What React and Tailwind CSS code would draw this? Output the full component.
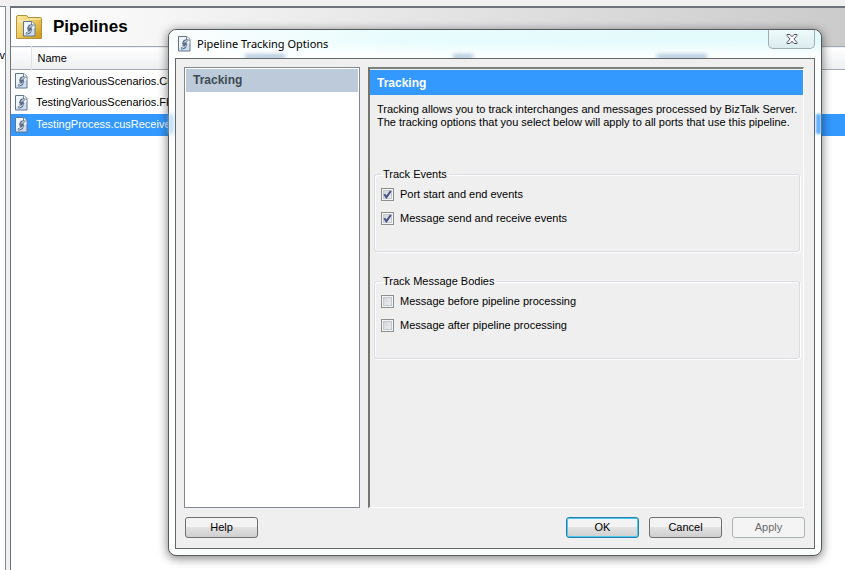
import React, { useState } from 'react';

const pipelines = [
  'TestingVariousScenarios.Cu',
  'TestingVariousScenarios.FF',
  'TestingProcess.cusReceive',
];

const groups = [
  {
    title: 'Track Events',
    gap: 'mb-[22px]',
    options: [
      { id: 'port', label: 'Port start and end events', checked: true },
      { id: 'message', label: 'Message send and receive events', checked: true },
    ],
  },
  {
    title: 'Track Message Bodies',
    gap: '',
    options: [
      { id: 'before', label: 'Message before pipeline processing', checked: false },
      { id: 'after', label: 'Message after pipeline processing', checked: false },
    ],
  },
];

function ScriptShape() {
  return (
    <g>
      <path d="M.5.5h8.5l3 3v11.500H.5z" fill="#cfdff1" stroke="#62758f" />
      <path d="M1 1h7.500v3.500H11.500V7L1 12.500z" fill="#edf5fd" />
      <path d="M8.500.5V4H12" fill="#fff" stroke="#7688a0" />
      {/* two slanted pipe links */}
      <path d="M9.500 4.300 6.500 5 5.300 7.600 8 8.400 6.800 11.300 3.300 12.700" fill="none" stroke="#5a6a84" strokeWidth="2.400" strokeLinejoin="round" />
      <path d="M9.300 4.600 7 5.300 6 7.200M8 8.800 6.700 11 3.800 12.300" fill="none" stroke="#e6eef8" strokeWidth="1" />
      <path d="M4.500 9.600h3M6.500 6.800h2.500" stroke="#3d4c66" strokeWidth=".8" />
    </g>
  );
}

function DocIcon() {
  return (
    <svg viewBox="0 0 13 16" className="h-4 w-[13px] shrink-0" aria-hidden="true">
      <ScriptShape />
    </svg>
  );
}

function FolderIcon() {
  return (
    <svg viewBox="0 0 26 25" className="h-[25px] w-[26px] shrink-0" aria-hidden="true">
      <defs>
        <linearGradient id="folder" x1="0" y1="0" x2="1" y2="1">
          <stop offset="0" stopColor="#fbe9a4" />
          <stop offset=".5" stopColor="#eecb5c" />
          <stop offset="1" stopColor="#c8940f" />
        </linearGradient>
      </defs>
      <path d="M.5 23.500V2Q.5.5 2 .5h8q1.500 0 2 2h12.500q1 0 1 1v20z" fill="url(#folder)" stroke="#b3913c" />
      <path d="M1.500 6h9l2-2h12" fill="none" stroke="#fdf2c4" />
      <g transform="translate(7 6)">
        <ScriptShape />
      </g>
    </svg>
  );
}

function CloseIcon() {
  return (
    <svg viewBox="0 0 12 10" className="h-[10px] w-3" aria-hidden="true">
      <path d="M1 .5h3l2 2.300L8 .5h3v1L8 5l3 3.500v1H8L6 7.200 4 9.500H1v-1L4 5 1 1.500z" fill="#fff" stroke="#4c5360" />
    </svg>
  );
}

function Option({ option }) {
  const [checked, setChecked] = useState(option.checked);
  return (
    <label className="flex h-6 items-center gap-[6px]">
      <span className="relative h-[13px] w-[13px]">
        <input
          type="checkbox"
          checked={checked}
          onChange={(e) => setChecked(e.target.checked)}
          className="block h-[13px] w-[13px] appearance-none border border-[#8e8f8f] bg-linear-to-br from-[#c9cdd2] to-[#f6f6f6] shadow-[inset_0_0_0_1px_#f4f4f4,inset_0_0_0_2px_#c3c8ce]"
        />
        {checked && (
          <svg viewBox="0 0 13 13" className="pointer-events-none absolute inset-0" aria-hidden="true">
            <path d="M3.300 6.200 5.400 9.300 9.800 3" fill="none" stroke="#414f87" strokeWidth="2" />
          </svg>
        )}
      </span>
      {option.label}
    </label>
  );
}

function OptionGroup({ group }) {
  return (
    <fieldset className={`h-[85px] rounded-[3px] border border-[#d9dde1] pl-[6px] shadow-[inset_1px_1px_0_#fff,1px_1px_0_#fff] ${group.gap}`}>
      <legend className="h-[14px] px-[2px] leading-[14px]">{group.title}</legend>
      <div className="pt-px">
        {group.options.map((o) => (
          <Option key={o.id} option={o} />
        ))}
      </div>
    </fieldset>
  );
}

const buttonBase = 'h-[21px] w-[73px] rounded-[3px] border text-center leading-[19px]';
const buttonFace = 'bg-linear-to-b from-[#f3f3f3] from-50% via-[#e2e2e2] via-50% to-[#cfcfcf]';

function TrackingDialog() {
  return (
    <div
      role="dialog"
      aria-labelledby="dialog-title"
      className="absolute top-[29px] right-[23px] bottom-[14px] left-[168px] flex flex-col rounded-lg border border-[#54595c] bg-[#fdffff] px-[6px] pb-[6px] shadow-[0_2px_10px_1px_rgba(0,0,0,0.45)]"
    >
      {/* glass tint of the title bar, with the column captions showing through */}
      <div className="absolute inset-x-0 top-0 h-7 overflow-hidden rounded-t-lg bg-linear-to-r from-[#fbfdfd] via-[#e6fcfd] via-40% to-[#e3fafb]">
        <div className="absolute inset-0 bg-linear-to-b from-transparent from-40% to-white" />
        <div className="absolute bottom-0 left-[76px] h-[3px] w-10 bg-[#86a9c9] blur-[2px]" />
        <div className="absolute bottom-0 left-[284px] h-[3px] w-5 bg-[#86a9c9] blur-[2px]" />
        <div className="absolute bottom-0 left-[488px] h-[3px] w-[50px] bg-[#86a9c9] blur-[2px]" />
      </div>
      <div className="absolute top-[84px] left-0 h-5 w-1 bg-[#a5d2fb] blur-[2px]" />
      <div className="absolute top-[84px] right-0 h-5 w-[5px] bg-[#5eaeff] blur-[1px]" />

      <div className="relative flex h-7 shrink-0 items-center gap-[6px] pl-[3px]">
        <DocIcon />
        <h2 id="dialog-title" className="font-['Noto_Sans',sans-serif] text-[11px]">Pipeline Tracking Options</h2>
        <button type="button" aria-label="Close" className="ml-auto flex h-[19px] w-[47px] items-center justify-center self-start rounded-b-[5px] border border-t-0 border-[#9fb0b5] bg-linear-to-b from-[#effbfb] to-[#dcecee]">
          <CloseIcon />
        </button>
      </div>

      <div className="relative flex min-h-0 flex-1 flex-col border border-[#63676a] bg-[#efefef] px-2 pt-2 pb-[10px]">
        <div className="flex min-h-0 flex-1 gap-2">
          <nav className="w-44 border border-[#828790] bg-white p-px">
            <button type="button" className="block h-[23px] w-full bg-[#bccad9] pl-[7px] text-left text-[12px] leading-[23px] font-bold text-[#3f4a54]">
              Tracking
            </button>
          </nav>
          <section className="mr-[2px] min-w-0 flex-1 border-t-2 border-r border-b border-l-2 border-t-[#7f827c] border-r-white border-b-white border-l-[#73746f]">
            <h3 className="mt-px h-[25px] bg-[#3399ff] pl-[7px] text-[12px] leading-[26px] font-bold text-white">Tracking</h3>
            <p className="mt-2 h-[64px] pl-[7px] leading-[13px] whitespace-nowrap">
              Tracking allows you to track interchanges and messages processed by BizTalk Server.
              <br />
              The tracking options that you select below will apply to all ports that use this pipeline.
            </p>
            <div className="pr-[3px] pl-1">
              {groups.map((g) => (
                <OptionGroup key={g.title} group={g} />
              ))}
            </div>
          </section>
        </div>
        <div className="mt-[9px] flex items-center gap-[10px] px-px">
          <button type="button" className={`${buttonBase} ${buttonFace} mr-auto border-[#707070]`}>Help</button>
          <button type="button" className={`${buttonBase} ${buttonFace} border-[#2c7fa8] shadow-[inset_0_0_0_1px_#48c8f0]`}>OK</button>
          <button type="button" className={`${buttonBase} ${buttonFace} border-[#707070]`}>Cancel</button>
          <button type="button" disabled className={`${buttonBase} border-[#adb2b5] bg-[#f4f4f4] text-[#6b6b6b]`}>Apply</button>
        </div>
      </div>
    </div>
  );
}

export default function App() {
  return (
    <div className="relative flex h-screen min-h-[480px] overflow-hidden bg-[#f0f0f0] pt-[6px] font-['Liberation_Sans',Arial,sans-serif] text-[11px] text-black">
      <aside className="w-[6px] shrink-0 overflow-hidden border-t border-r border-[#828790] bg-white pt-10">
        <span className="flex justify-end">v</span>
      </aside>
      <main className="ml-1 min-w-0 flex-1 overflow-hidden border-t-2 border-l border-[#6f7277] bg-white">
        <header className="flex h-[38px] items-center gap-[11px] bg-linear-to-r from-white to-[#cbcbcb] pl-[5px]">
          <FolderIcon />
          <h1 className="text-[17px] font-bold">Pipelines</h1>
        </header>
        <table className="w-full table-fixed border-collapse text-left">
          <thead>
            <tr className="h-[23px] border-t border-b border-[#a5a8ad] bg-linear-to-b from-white to-[#eeeff2]">
              <th className="w-5 border-r border-[#dfe2e7]" aria-label="Icon" />
              <th className="pl-[6px] font-normal">Name</th>
            </tr>
          </thead>
          <tbody>
            {pipelines.map((name, i) => (
              <tr key={name} className={i === 2 ? 'h-[22px] bg-[#3399ff] text-white' : 'h-[22px]'}>
                <td className="pl-1">
                  <DocIcon />
                </td>
                <td className="pl-[5px] whitespace-nowrap">{name}</td>
              </tr>
            ))}
          </tbody>
        </table>
      </main>
      <TrackingDialog />
    </div>
  );
}
